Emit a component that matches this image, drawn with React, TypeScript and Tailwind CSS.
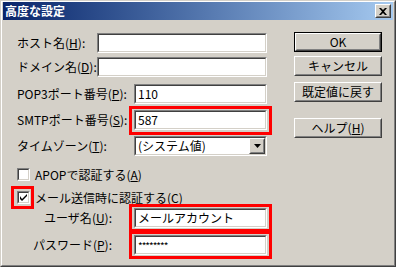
import React from "react";

const font = "font-['MS_UI_Gothic','Noto_Sans_CJK_JP',sans-serif]";

const Sunken: React.FC<{ className?: string; children?: React.ReactNode }> = ({
  className = "",
  children,
}) => (
  <div
    className={`border border-t-[#808080] border-l-[#808080] border-b-white border-r-white ${className}`}
  >
    <div className="h-full border border-t-[#404040] border-l-[#404040] border-b-[#d4d0c8] border-r-[#d4d0c8] bg-white flex items-center">
      {children}
    </div>
  </div>
);

const Raised: React.FC<{ className?: string; children?: React.ReactNode }> = ({
  className = "",
  children,
}) => (
  <div
    className={`border border-t-white border-l-white border-b-[#404040] border-r-[#404040] ${className}`}
  >
    <div className="h-full border border-t-[#d4d0c8] border-l-[#d4d0c8] border-b-[#808080] border-r-[#808080] flex items-center justify-center">
      {children}
    </div>
  </div>
);

const Highlight: React.FC<{ className: string }> = ({ className }) => (
  <span className={`absolute border-[3px] border-[#ff0000] pointer-events-none ${className}`} />
);

const Label: React.FC<{ text: string; k: string; className?: string }> = ({
  text,
  k,
  className = "",
}) => (
  <span className={`text-[12px] text-black whitespace-nowrap ${className}`}>
    {text}(<u>{k}</u>):
  </span>
);

const Button: React.FC<{ children: React.ReactNode; isDefault?: boolean }> = ({
  children,
  isDefault,
}) =>
  isDefault ? (
    <div className="border border-black w-[88px] h-[20px]">
      <Raised className="h-full text-[12px]">{children}</Raised>
    </div>
  ) : (
    <Raised className="w-[88px] h-[20px] text-[12px]">{children}</Raised>
  );

const CheckBox: React.FC<{ checked?: boolean }> = ({ checked }) => (
  <Sunken className="w-[13px] h-[13px]">
    {checked && (
      <svg width="7" height="7" viewBox="0 0 7 7" className="mx-auto">
        <path d="M0 2 L0 5 L2 7 L7 2 L7 0 L2 5 Z" fill="#000" />
      </svg>
    )}
  </Sunken>
);

export default function App() {
  return (
    <div
      className={`w-[396px] h-[267px] bg-[#d4d0c8] border border-t-[#d4d0c8] border-l-[#d4d0c8] border-b-[#404040] border-r-[#404040] ${font}`}
    >
      <div className="h-full border border-t-white border-l-white border-b-[#808080] border-r-[#808080] px-[1px] flex flex-col">
        {/* title bar */}
        <div className="h-[18px] flex items-center justify-between pl-[2px] pr-[2px] bg-gradient-to-r from-[#0a246a] to-[#a6caf0]">
          <span className="text-white font-bold text-[12px] leading-none">高度な設定</span>
          <Raised className="w-[16px] h-[14px] bg-[#d4d0c8]">
            <svg width="8" height="7" viewBox="0 0 8 7">
              <path d="M0 0h2l2 2 2-2h2L5 3.5 8 7H6L4 5 2 7H0l3-3.5z" fill="#000" />
            </svg>
          </Raised>
        </div>

        <div className="flex flex-1">
          {/* form */}
          <div className="w-[278px] pl-[14px] pt-[13px] flex flex-col">
            <div className="flex items-center h-[20px]">
              <Label text="ホスト名" k="H" className="w-[80px]" />
              <Sunken className="w-[170px] h-[20px]" />
            </div>
            <div className="flex items-center h-[20px] mt-[4px]">
              <Label text="ドメイン名" k="D" className="w-[80px]" />
              <Sunken className="w-[170px] h-[20px]" />
            </div>
            <div className="flex items-center h-[20px] mt-[7px]">
              <Label text="POP3ポート番号" k="P" className="w-[117px]" />
              <Sunken className="w-[133px] h-[20px]">
                <span className="text-[12px] pl-[2px]">110</span>
              </Sunken>
            </div>
            <div className="flex items-center h-[20px] mt-[6px]">
              <Label text="SMTPポート番号" k="S" className="w-[117px]" />
              <div className="relative">
                <Sunken className="w-[133px] h-[20px]">
                  <span className="text-[12px] pl-[2px]">587</span>
                </Sunken>
                <Highlight className="-inset-x-[5px] -top-[4px] -bottom-[5px]" />
              </div>
            </div>
            <div className="flex items-center h-[20px] mt-[6px]">
              <Label text="タイムゾーン" k="T" className="w-[117px]" />
              <Sunken className="w-[133px] h-[20px]">
                <span className="text-[12px] pl-[2px] flex-1">(システム値)</span>
                <Raised className="w-[16px] h-[16px] bg-[#d4d0c8]">
                  <svg width="7" height="4" viewBox="0 0 7 4">
                    <path d="M0 0h7L3.5 4z" fill="#000" />
                  </svg>
                </Raised>
              </Sunken>
            </div>
            <div className="flex items-center h-[15px] mt-[11px] gap-[5px]">
              <CheckBox />
              <span className="text-[12px]">
                APOPで認証する(<u>A</u>)
              </span>
            </div>
            <div className="flex items-center h-[15px] mt-[8px] gap-[5px]">
              <div className="relative">
                <CheckBox checked />
                <Highlight className="-left-[6px] -right-[4px] -top-[5px] -bottom-[5px]" />
              </div>
              <span className="text-[12px]">メール送信時に認証する(C)</span>
            </div>
            <div className="flex items-center h-[20px] mt-[3px]">
              <Label text="ユーザ名" k="U" className="w-[98px] text-right pr-[3px]" />
              <div className="relative ml-[19px]">
                <Sunken className="w-[133px] h-[20px]">
                  <span className="text-[12px] pl-[2px]">メールアカウント</span>
                </Sunken>
                <Highlight className="-inset-x-[5px] -top-[4px] -bottom-[4px]" />
              </div>
            </div>
            <div className="flex items-center h-[20px] mt-[7px]">
              <Label text="パスワード" k="P" className="w-[98px] text-right pr-[3px]" />
              <div className="relative ml-[19px]">
                <Sunken className="w-[133px] h-[20px]">
                  <span className="text-[10px] pl-[2px] tracking-[-1px]">********</span>
                </Sunken>
                <Highlight className="-inset-x-[5px] -top-[4px] -bottom-[4px]" />
              </div>
            </div>
          </div>

          {/* buttons */}
          <div className="pl-[13px] pt-[12px] flex flex-col">
            <Button isDefault>OK</Button>
            <div className="mt-[4px]">
              <Button>キャンセル</Button>
            </div>
            <div className="mt-[6px]">
              <Button>既定値に戻す</Button>
            </div>
            <div className="mt-[16px]">
              <Button>
                ヘルプ(<u>H</u>)
              </Button>
            </div>
          </div>
        </div>
      </div>
    </div>
  );
}
